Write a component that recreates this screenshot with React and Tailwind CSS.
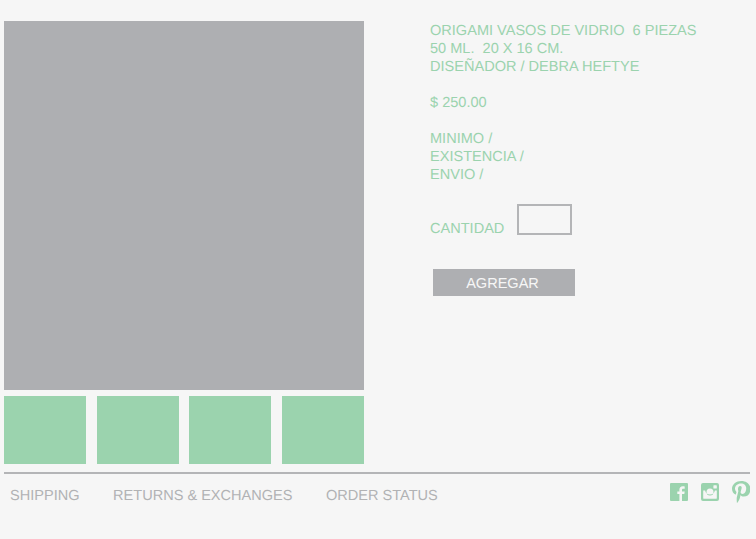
import React from "react";

const GREEN = "#9bd3ae";

function FacebookIcon() {
  return (
    <svg width="18" height="18" viewBox="0 0 18 18" className="block">
      <path
        fill={GREEN}
        fillRule="evenodd"
        d="M1 0h16a1 1 0 0 1 1 1v16a1 1 0 0 1-1 1h-5v-7h2.300l.4-2.600H12V6.900c0-.8.3-1.200 1.300-1.200h1.400V3.400c-.3 0-1-.1-2-.1-2 0-3.300 1.200-3.300 3.400v1.700H7.300V11h2.100v7H1a1 1 0 0 1-1-1V1a1 1 0 0 1 1-1z"
      />
    </svg>
  );
}

function InstagramIcon() {
  return (
    <svg width="18" height="18" viewBox="0 0 18 18" className="block">
      <path
        fill={GREEN}
        fillRule="evenodd"
        d="M2 0h14a2 2 0 0 1 2 2v14a2 2 0 0 1-2 2H2a2 2 0 0 1-2-2V2a2 2 0 0 1 2-2zm11 2.200a.6.6 0 0 0-.6.6v2.200a.6.6 0 0 0 .6.6h2.200a.6.6 0 0 0 .6-.6V2.800a.6.6 0 0 0-.6-.6H13zM2.200 7.400v7.500a.9.9 0 0 0 .9.900h11.800a.9.9 0 0 0 .9-.9V7.400h-1.900a5 5 0 0 1-9.800 0h-1.900zM9 5.600a3.500 3.500 0 1 0 0 7 3.500 3.500 0 0 0 0-7z"
      />
    </svg>
  );
}

function PinterestIcon() {
  return (
    <svg width="18" height="22" viewBox="0 0 18 22" className="block -mt-[2px]">
      <path
        fill={GREEN}
        fillRule="evenodd"
        d="M9.400 0C4 0 0 3.400 0 7.800c0 2.500 1.200 4.800 3.300 5.600.4.100.6 0 .7-.4l.4-1.500c.1-.4 0-.6-.3-.9-.7-.8-1.100-1.700-1.100-2.900 0-3 2.500-5.300 5.900-5.300 3.200 0 5.300 2 5.300 4.900 0 3.300-1.500 5.700-3.700 5.700-1.200 0-2.100-1-1.800-2.200.3-1.400 1-3 1-4 0-.9-.5-1.700-1.500-1.700-1.200 0-2.200 1.300-2.200 3 0 1.100.4 1.800.4 1.800L4.900 16c-.4 1.800-.1 4.500 0 5.700 0 .2.300.3.400.1.200-.3 1.900-2.500 2.500-4.600l.8-3.200c.5.900 1.800 1.600 3.200 1.600 4.200 0 6.700-3.500 6.700-7.900C18 3.100 14.400 0 9.400 0z"
      />
    </svg>
  );
}

export default function App() {
  const thumbs = [1, 2, 3, 4];

  return (
    <div className="w-[756px] h-[539px] overflow-hidden bg-[#f6f6f6] font-['Liberation_Sans',Arial,sans-serif] [text-rendering:geometricPrecision]">
      <div className="flex pt-[21px] pl-1">
        {/* Gallery */}
        <div className="w-[360px] shrink-0">
          <div className="h-[369px] bg-[#aeafb2]"></div>
          <div className="flex justify-between mt-[6px]">
            {thumbs.map(t => (
              <div key={t} className="w-[82px] h-[68px] bg-[#9bd3ae]"></div>
            ))}
          </div>
        </div>

        {/* Product info */}
        <div className="ml-[66px] pt-px text-[14.55px] leading-[18px] text-[#9bd3ae]">
          <div className="whitespace-pre">ORIGAMI VASOS DE VIDRIO  6 PIEZAS</div>
          <div className="whitespace-pre">50 ML.  20 X 16 CM.</div>
          <div>DISEÑADOR / DEBRA HEFTYE</div>
          <div className="mt-[18px]">$ 250.00</div>
          <div className="mt-[18px]">MINIMO /</div>
          <div>EXISTENCIA /</div>
          <div>ENVIO /</div>
          <div className="flex items-end mt-[20px]">
            <span className="w-[87px] mb-[-3px]">CANTIDAD</span>
            <div className="w-[55px] h-[31px] border-2 border-[#b4b5b7]"></div>
          </div>
          <button className="block w-[142px] h-[27px] ml-[3px] mt-[34px] pr-[3px] bg-[#aeafb2] text-[#f6f6f6]">
            AGREGAR
          </button>
        </div>
      </div>

      {/* Footer */}
      <div className="flex items-start justify-between h-[40px] w-[746px] ml-1 mt-[8px] pt-[13px] pl-[6px] border-t-2 border-[#b4b5b7] text-[14.55px] leading-[18px] text-[#b1b2b4]">
        <div className="flex gap-[33.5px]">
          <span>SHIPPING</span>
          <span>RETURNS &amp; EXCHANGES</span>
          <span>ORDER STATUS</span>
        </div>
        <div className="flex items-start gap-[13px] -mt-[4px]">
          <FacebookIcon />
          <InstagramIcon />
          <PinterestIcon />
        </div>
      </div>
    </div>
  );
}
